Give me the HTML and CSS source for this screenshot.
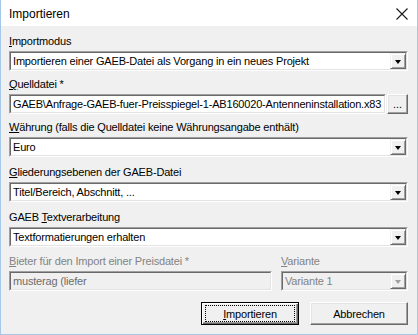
FILE: index.html
```html
<!DOCTYPE html>
<html lang="de">
<head>
<meta charset="utf-8">
<title>Importieren</title>
<link rel="stylesheet" href="styles.css">
</head>
<body>
<div class="window">
  <div class="titlebar">
    <span class="title">Importieren</span>
    <svg class="close" width="12" height="12" viewBox="0 0 12 12"><path d="M0.5 0.5 L11.5 11.5 M11.5 0.5 L0.5 11.5" stroke="#1a1a1a" stroke-width="1.1" fill="none"/></svg>
  </div>
  <div class="content">
    <div class="group g1">
      <div class="label"><u>I</u>mportmodus</div>
      <div class="combo"><div class="inner"><span class="value">Importieren einer GAEB-Datei als Vorgang in ein neues Projekt</span><span class="arrow"></span></div></div>
    </div>
    <div class="group g2">
      <div class="label"><u>Q</u>uelldatei *</div>
      <div class="row">
        <div class="combo grow"><div class="inner"><span class="value">GAEB\Anfrage-GAEB-fuer-Preisspiegel-1-AB160020-Antenneninstallation.x83</span></div></div>
        <div class="btn small"><span>...</span></div>
      </div>
    </div>
    <div class="group g2">
      <div class="label"><u>W</u>ährung (falls die Quelldatei keine Währungsangabe enthält)</div>
      <div class="combo"><div class="inner"><span class="value">Euro</span><span class="arrow"></span></div></div>
    </div>
    <div class="group g3">
      <div class="label"><u>G</u>liederungsebenen der GAEB-Datei</div>
      <div class="combo"><div class="inner"><span class="value">Titel/Bereich, Abschnitt, ...</span><span class="arrow"></span></div></div>
    </div>
    <div class="group g3">
      <div class="label">GAEB <u>T</u>extverarbeitung</div>
      <div class="combo"><div class="inner"><span class="value">Textformatierungen erhalten</span><span class="arrow"></span></div></div>
    </div>
    <div class="split g4">
      <div class="group bieter">
        <div class="label disabled"><u>B</u>ieter für den Import einer Preisdatei *</div>
        <div class="combo dis"><div class="inner"><span class="value">musterag (liefer</span></div></div>
      </div>
      <div class="group variante">
        <div class="label disabled"><u>V</u>ariante</div>
        <div class="combo dis"><div class="inner"><span class="value">Variante 1</span><span class="arrow"></span></div></div>
      </div>
    </div>
    <div class="buttons">
      <div class="btn default"><span class="focus"><u>I</u>mportieren</span></div>
      <div class="btn"><span>Abbrechen</span></div>
    </div>
  </div>
</div>
</body>
</html>
```

FILE: styles.css
```css
* { box-sizing: border-box; }
html, body { margin: 0; padding: 0; background: #ffffff; }
body { font-family: "Liberation Sans", Arial, sans-serif; font-size: 11px; letter-spacing: -0.18px; color: #000; }

.window {
  width: 418px;
  height: 335px;
  border: 1px solid #a6c8e8;
  border-top: none;
  background: #f0f0f0;
  display: flex;
  flex-direction: column;
}

.titlebar {
  height: 26px;
  background: #ffffff;
  display: flex;
  align-items: center;
  justify-content: space-between;
  padding: 0 9px 0 8px;
  flex: none;
}
.title { font-size: 12px; letter-spacing: 0; color: #000; padding-top: 1px; }
.close { display: block; margin-top: 1px; }

.content {
  padding: 8px 9px 0 8px;
  display: flex;
  flex-direction: column;
}

.group { display: flex; flex-direction: column; }
.g2 { margin-top: 6px; }
.g3 { margin-top: 8px; }
.g4 { margin-top: 7px; }

.label { height: 15px; line-height: 15px; margin-bottom: 2px; white-space: nowrap; }
.label.disabled { color: #838383; }
.label u, .btn u { text-decoration: underline; text-underline-offset: 1px; }

.combo {
  height: 20px;
  border-top: 1px solid #a0a0a0;
  border-left: 1px solid #a0a0a0;
  border-right: 1px solid #ffffff;
  border-bottom: 1px solid #ffffff;
}
.combo .inner {
  height: 100%;
  background: #fff;
  border-top: 1px solid #696969;
  border-left: 1px solid #696969;
  border-right: 1px solid #e3e3e3;
  border-bottom: 1px solid #e3e3e3;
  display: flex;
  align-items: stretch;
}
.combo .value {
  flex: 1;
  padding-left: 2px;
  line-height: 16px;
  white-space: nowrap;
  overflow: hidden;
}
.combo.dis .inner { background: #f0f0f0; }
.combo.dis .value { color: #6d6d6d; }
.variante .combo.dis .value { color: #838383; }

.arrow {
  width: 16px;
  flex: none;
  background: #f0f0f0;
  border-top: 1px solid #f0f0f0;
  border-left: 1px solid #f0f0f0;
  border-right: 1px solid #696969;
  border-bottom: 1px solid #696969;
  box-shadow: inset 1px 1px 0 #ffffff, inset -1px -1px 0 #a0a0a0;
  position: relative;
}
.arrow::after {
  content: "";
  position: absolute;
  left: 4px;
  top: 6px;
  border-left: 3.5px solid transparent;
  border-right: 3.5px solid transparent;
  border-top: 4px solid #000;
}
.combo.dis .arrow::after { border-top-color: #a0a0a0; }

.row { display: flex; gap: 1px; }
.grow { flex: 1; min-width: 0; }

.btn {
  height: 23px;
  width: 98px;
  background: #f0f0f0;
  border-top: 1px solid #ffffff;
  border-left: 1px solid #ffffff;
  border-right: 1px solid #696969;
  border-bottom: 1px solid #696969;
  box-shadow: inset -1px -1px 0 #a0a0a0, inset 1px 1px 0 #e3e3e3;
  display: flex;
  align-items: center;
  justify-content: center;
}
.btn.small {
  width: 21px;
  height: 20px;
  align-items: flex-end;
  line-height: 14px;
  padding-bottom: 2px;
  letter-spacing: 0;
}
.btn.default {
  border: 1px solid #000;
  box-shadow: inset 1px 1px 0 #ffffff, inset -1px -1px 0 #696969, inset -2px -2px 0 #a0a0a0;
}
.focus {
  display: flex;
  align-items: center;
  justify-content: center;
  width: 88px;
  height: 15px;
  outline: 1px dotted #000;
}

.split { display: flex; gap: 9px; }
.bieter { width: 263px; }
.variante { flex: 1; }

.buttons {
  margin-top: 11px;
  display: flex;
  justify-content: flex-end;
  gap: 11px;
}
```
